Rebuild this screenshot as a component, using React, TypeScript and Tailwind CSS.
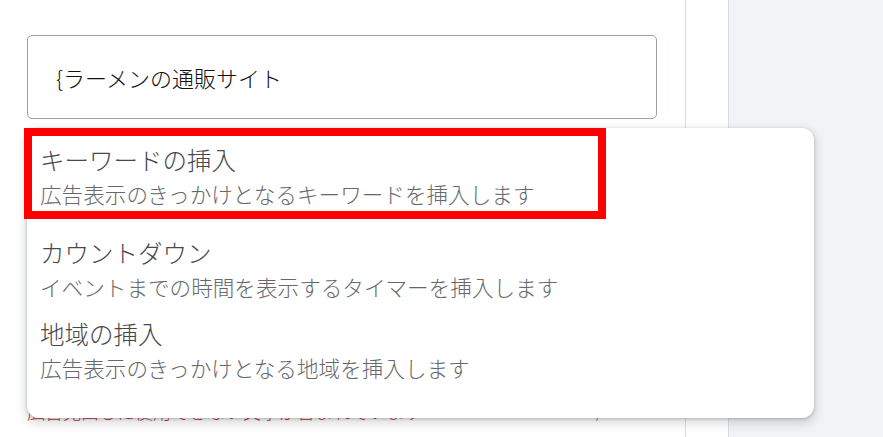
import * as React from 'react';

const items = [
  { title: 'キーワードの挿入', desc: '広告表示のきっかけとなるキーワードを挿入します', gap: 'pt-[15px]' },
  { title: 'カウントダウン', desc: 'イベントまでの時間を表示するタイマーを挿入します', gap: 'pt-[25px]' },
  { title: '地域の挿入', desc: '広告表示のきっかけとなる地域を挿入します', gap: 'pt-[13px]' },
];

export default function App() {
  return (
    <div
      className="relative flex w-[883px] h-[437px] overflow-hidden bg-white font-light"
      style={{ fontFamily: '"Noto Sans CJK JP", "Noto Sans", sans-serif' }}
    >
      {/* Editor column */}
      <div className="w-[686px] shrink-0 border-r border-[#dadce0] pt-[35px] pl-[27px]">
        <div className="flex items-center w-[630px] h-[84px] rounded-[5px] border border-[#9aa0a6] pl-[28px]">
          <span className="text-[22px] text-[#111111] leading-none">{'{'}ラーメンの通販サイト</span>
        </div>
        <div className="flex items-end justify-between w-[630px] mt-[282px] pr-[34px]">
          <span className="text-[18px] leading-[20px] text-[#c5221f]">広告見出しに使用できない文字が含まれています</span>
          <span className="text-[16px] leading-[20px] text-[#5f6368]">9 / 30</span>
        </div>
      </div>

      {/* Gutter */}
      <div className="w-[43px] shrink-0 border-r border-[#dadce0]" />

      {/* Preview area */}
      <div className="flex-1 bg-[#f1f3f4]" />

      {/* Insert menu */}
      <div className="absolute left-[27px] top-[128px] z-10 w-[787px] h-[290px] rounded-[12px] bg-white px-[13px] shadow-[0_1px_3px_rgba(60,64,67,0.3),0_4px_8px_3px_rgba(60,64,67,0.15)]">
        {items.map(item => (
          <div key={item.title} className={item.gap}>
            <div className="text-[24.5px] leading-[33px] text-[#45484c]">{item.title}</div>
            <div className="text-[21.6px] leading-[35px] text-[#65696d]">{item.desc}</div>
          </div>
        ))}
      </div>

      {/* Highlight annotation */}
      <div className="absolute left-[24px] top-[128px] z-20 w-[582px] h-[91px] border-[8px] border-[#ff0000]" />
    </div>
  );
}
